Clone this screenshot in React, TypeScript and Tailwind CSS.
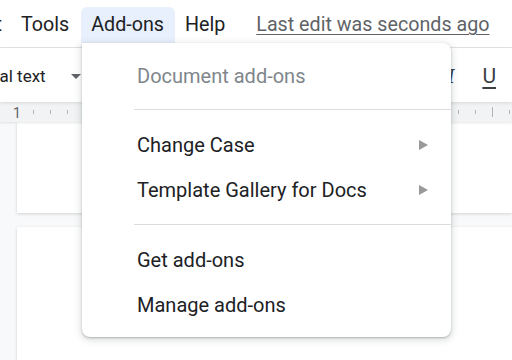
const menuFont = { fontFamily: "Roboto, 'Liberation Sans', sans-serif" };

function Caret() {
  return (
    <svg width="10" height="5" viewBox="0 0 10 5" className="text-[#5f6368]">
      <path d="M0 0h10L5 5z" fill="currentColor" />
    </svg>
  );
}

function SubArrow() {
  return (
    <svg width="9" height="10" viewBox="0 0 9 10">
      <path d="M0 0l9 5-9 5z" fill="#999" />
    </svg>
  );
}

function Ruler() {
  const ticks = Array.from({ length: 29 }, (_, i) => 16 + (i + 1) * 17);
  return (
    <svg width="512" height="20" className="block">
      {ticks.map((x, i) => (
        <line
          key={x}
          x1={x + 0.5}
          x2={x + 0.5}
          y1={(i + 1) % 4 === 0 ? 5 : 8}
          y2={(i + 1) % 4 === 0 ? 15 : 12}
          stroke="#b0b3b8"
          strokeWidth="1"
        />
      ))}
    </svg>
  );
}

function MenuItem({ label, sub }: { label: string; sub?: boolean }) {
  return (
    <div className="h-[45px] flex items-center justify-between pl-[55px] pr-[23px] text-[20px] text-[#202124]">
      <span>{label}</span>
      {sub && <SubArrow />}
    </div>
  );
}

export default function App() {
  return (
    <div className="relative w-[512px] h-[360px] overflow-hidden bg-[#f8f9fa]" style={menuFont}>
      {/* menu bar */}
      <div className="h-[48px] bg-white flex items-start pt-[7px] border-b border-[#e3e5e8] text-[19.7px] text-[#202124]">
        <div className="h-[36px] flex items-center ml-[-61px] pr-[19px]">Format</div>
        <div className="h-[36px] flex items-center pr-[12px]">Tools</div>
        <div className="h-[36px] flex items-center pl-[10px] pr-[11px] bg-[#e8f0fe] rounded-t-md">Add-ons</div>
        <div className="h-[36px] flex items-center px-[10px]">Help</div>
        <div className="h-[36px] flex items-center ml-[21px] text-[#5f6368] underline underline-offset-[3px] decoration-1">
          Last edit was seconds ago
        </div>
      </div>

      {/* toolbar */}
      <div className="h-[54px] pt-[3px] bg-white flex items-center shadow-[0_1px_3px_rgba(60,64,67,0.15)] relative z-10">
        <div className="flex items-center gap-[25px] ml-[-43px] text-[17px] text-[#202124]">
          <span>Normal text</span>
          <Caret />
        </div>
        <div className="ml-auto flex items-center gap-[28px] pr-[16px] text-[21px] text-[#3c4043]">
          <span className="italic font-serif">I</span>
          <span className="underline underline-offset-[4px] decoration-2">U</span>
        </div>
      </div>

      {/* ruler */}
      <div className="h-[20px] bg-[#f1f3f4] relative shadow-[0_1px_2px_rgba(60,64,67,0.12)] z-[5]">
        <span className="absolute left-[13px] top-[1px] text-[14px] text-[#5f6368]">1</span>
        <Ruler />
      </div>

      {/* pages */}
      <div className="pl-[17px] flex flex-col gap-[14px]">
        <div className="h-[91px] bg-white shadow-[0_1px_3px_rgba(60,64,67,0.2)]" />
        <div className="h-[140px] bg-white shadow-[0_1px_3px_rgba(60,64,67,0.2)]" />
      </div>

      {/* add-ons dropdown */}
      <div className="absolute left-[82px] top-[43px] w-[369px] h-[294px] bg-white rounded-lg rounded-tl-none shadow-[0_2px_6px_2px_rgba(60,64,67,0.15),0_1px_2px_rgba(60,64,67,0.3)] z-20 pt-[9px]">
        <div className="h-[45px] pt-[2px] flex items-center pl-[55px] text-[20px] text-[#80868b]">Document add-ons</div>
        <div className="ml-[52px] my-[12px] border-t border-[#dadce0]" />
        <MenuItem label="Change Case" sub />
        <MenuItem label="Template Gallery for Docs" sub />
        <div className="ml-[52px] my-[12px] border-t border-[#dadce0]" />
        <MenuItem label="Get add-ons" />
        <MenuItem label="Manage add-ons" />
      </div>
    </div>
  );
}
